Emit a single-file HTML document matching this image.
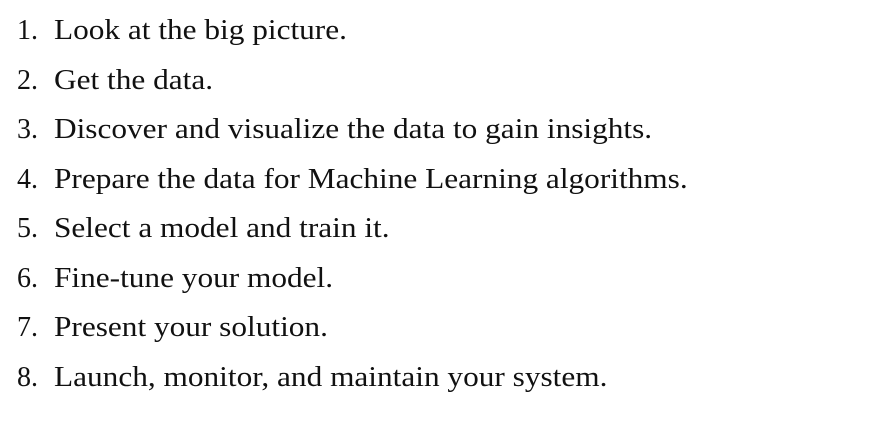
<!DOCTYPE html>
<html><head><meta charset="utf-8"><style>
html,body{margin:0;padding:0;background:#fff;width:890px;height:435px;overflow:hidden}
body{font-family:"Liberation Serif",serif;font-size:28px;color:#111;position:relative}
.l{position:absolute;left:0;height:50px;line-height:50px;white-space:nowrap}
.n{position:absolute;left:17px}
.t{position:absolute;left:54px;transform:scaleX(1.118);transform-origin:0 50%}
</style></head><body>
<div class="l" style="top:6px"><span class="n">1.</span><span class="t">Look at the big picture.</span></div>
<div class="l" style="top:55.5px"><span class="n">2.</span><span class="t">Get the data.</span></div>
<div class="l" style="top:105px"><span class="n">3.</span><span class="t">Discover and visualize the data to gain insights.</span></div>
<div class="l" style="top:154.5px"><span class="n">4.</span><span class="t">Prepare the data for Machine Learning algorithms.</span></div>
<div class="l" style="top:204px"><span class="n">5.</span><span class="t">Select a model and train it.</span></div>
<div class="l" style="top:253.5px"><span class="n">6.</span><span class="t">Fine-tune your model.</span></div>
<div class="l" style="top:303px"><span class="n">7.</span><span class="t">Present your solution.</span></div>
<div class="l" style="top:352.5px"><span class="n">8.</span><span class="t">Launch, monitor, and maintain your system.</span></div>
</body></html>
